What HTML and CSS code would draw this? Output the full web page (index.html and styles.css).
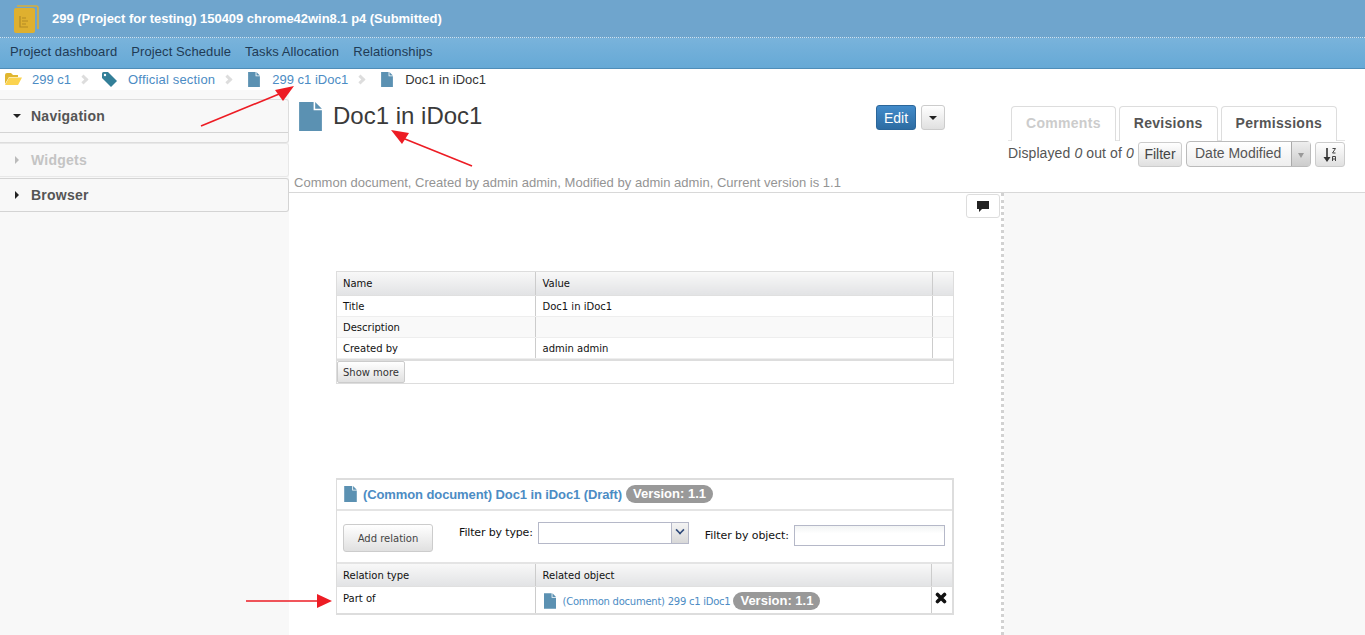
FILE: index.html
```html
<!DOCTYPE html>
<html lang="en">
<head>
  <meta charset="UTF-8">
  <title>Doc1 in iDoc1</title>
  <link rel="stylesheet" href="styles.css">
</head>
<body>

  <svg width="0" height="0" class="defs">
    <symbol id="doc-icon" viewBox="0 0 22 28">
      <path d="M0 0H14V8H22V28H0Z" fill="#5b91b2"/>
      <path d="M15.5 0L22 6.5H15.5Z" fill="#5b91b2"/>
    </symbol>
  </svg>

  <div class="topbar">
    <svg class="app-logo" width="25" height="28" viewBox="0 0 25 28">
      <path d="M3 1H22Q24 1 24 3V24" fill="none" stroke="#d9ae38" stroke-width="1.6"/>
      <rect x="0" y="3" width="21" height="25" rx="2" fill="#dfb02f"/>
      <path d="M6 11V22H14M8 13H12M8 16H14M8 19H12" fill="none" stroke="#b38a25" stroke-width="1.2"/>
    </svg>
    <span class="project-title">299 (Project for testing) 150409 chrome42win8.1 p4 (Submitted)</span>
  </div>

  <div class="menubar">
    <a href="#">Project dashboard</a>
    <a href="#">Project Schedule</a>
    <a href="#">Tasks Allocation</a>
    <a href="#">Relationships</a>
  </div>

  <div class="crumbs">
    <svg class="crumb-icon folder" width="17" height="12" viewBox="0 0 17 12">
      <path d="M0 2Q0 0 2 0H6L8 2H13V4H4L0 11Z" fill="#e0b62f"/>
      <path d="M4 4.5H17L13 12H0Z" fill="#fbd34f"/>
    </svg>
    <a href="#">299 c1</a>
    <span class="crumb-sep"></span>
    <svg class="crumb-icon tag" width="15" height="15" viewBox="0 0 15 15">
      <path d="M0 1.5Q0 0 1.5 0H6L15 9L9 15L0 6Z" fill="#337f98"/>
      <circle cx="3" cy="3" r="1.2" fill="#fff"/>
    </svg>
    <a href="#" class="after-tag">Official section</a>
    <span class="crumb-sep"></span>
    <svg class="crumb-icon crumb-doc" width="12" height="15"><use href="#doc-icon"/></svg>
    <a href="#" class="after-doc">299 c1 iDoc1</a>
    <span class="crumb-sep"></span>
    <svg class="crumb-icon crumb-doc" width="12" height="15"><use href="#doc-icon"/></svg>
    <span class="crumb-current">Doc1 in iDoc1</span>
  </div>

  <div class="workspace">
    <div class="sidebar">
      <div class="side-panel open">
        <div class="side-title"><span class="caret down"></span>Navigation</div>
      </div>
      <div class="side-panel disabled">
        <div class="side-title"><span class="caret right"></span>Widgets</div>
      </div>
      <div class="side-panel">
        <div class="side-title"><span class="caret right"></span>Browser</div>
      </div>
    </div>

    <div class="main">
      <div class="doc-head">
        <div class="doc-info">
          <div class="doc-title-row">
            <svg class="doc-title-icon" width="23" height="29"><use href="#doc-icon"/></svg>
            <h1>Doc1 in iDoc1</h1>
          </div>
          <p class="doc-meta">Common document, Created by admin admin, Modified by admin admin, Current version is 1.1</p>
        </div>
        <div class="doc-actions">
          <button class="edit-btn">Edit</button>
          <button class="caret-btn"><span class="caret down"></span></button>
        </div>
        <div class="doc-tabs">
          <div class="tabs">
            <div class="tab active">Comments</div>
            <div class="tab">Revisions</div>
            <div class="tab">Permissions</div>
          </div>
          <div class="tab-tools">
            <span class="tool-count">Displayed <em>0</em> out of <em>0</em></span>
            <button class="tool-btn filter-btn">Filter</button>
            <div class="sort-select">
              <span class="sort-value">Date Modified</span>
              <span class="sort-arrow"></span>
            </div>
            <button class="tool-btn sort-btn">
              <svg width="16" height="16" viewBox="0 0 16 16">
                <path d="M5 1V11" stroke="#333" stroke-width="1.6"/>
                <path d="M1.5 10H8.5L5 15Z" fill="#333"/>
                <path d="M10.5 1.5H13.5L10.5 6H13.5M10.5 14V9.5H13.5V14M10.5 12H13.5" fill="none" stroke="#444" stroke-width="1"/>
              </svg>
            </button>
          </div>
        </div>
      </div>

      <div class="doc-body">
        <div class="doc-content">
          <button class="comment-btn">
            <svg width="12" height="11" viewBox="0 0 12 11">
              <path d="M0 0H12V8H5L2 11V8H0Z" fill="#222"/>
            </svg>
          </button>

          <div class="grid-box props-box">
            <table class="grid">
              <thead>
                <tr><th class="col-a">Name</th><th>Value</th><th class="col-c"></th></tr>
              </thead>
              <tbody>
                <tr><td>Title</td><td>Doc1 in iDoc1</td><td></td></tr>
                <tr class="alt"><td>Description</td><td></td><td></td></tr>
                <tr><td>Created by</td><td>admin admin</td><td></td></tr>
              </tbody>
            </table>
            <div class="grid-foot"><button class="more-btn">Show more</button></div>
          </div>

          <div class="grid-box relations-box">
            <div class="rel-title">
              <svg width="13" height="16"><use href="#doc-icon"/></svg>
              <a href="#">(Common document) Doc1 in iDoc1 (Draft)</a>
              <span class="badge">Version: 1.1</span>
            </div>
            <div class="rel-tools">
              <button class="add-btn">Add relation</button>
              <label class="type-filter">Filter by type:
                <span class="combo"><span class="combo-arrow"></span></span>
              </label>
              <label class="object-filter">Filter by object:
                <input type="text" class="object-input">
              </label>
            </div>
            <table class="grid">
              <thead>
                <tr><th class="col-a">Relation type</th><th>Related object</th><th class="col-c"></th></tr>
              </thead>
              <tbody>
                <tr class="rel-row">
                  <td class="part-of">Part of</td>
                  <td>
                    <span class="rel-object">
                      <svg width="12" height="16"><use href="#doc-icon"/></svg>
                      <a href="#">(Common document) 299 c1 iDoc1</a>
                      <span class="badge">Version: 1.1</span>
                    </span>
                  </td>
                  <td class="remove-cell">
                    <svg width="12" height="12" viewBox="0 0 12 12">
                      <path d="M2.5 2.5L9.5 9.5M9.5 2.5L2.5 9.5" stroke="#111" stroke-width="3.6" stroke-linecap="round"/>
                    </svg>
                  </td>
                </tr>
              </tbody>
            </table>
          </div>
        </div>
        <div class="side-pane"></div>
      </div>
    </div>
  </div>

  <!-- red arrows drawn on top of the screenshot -->
  <svg class="arrows" width="1365" height="635" viewBox="0 0 1365 635">
    <g stroke="#ed1c24" stroke-width="1.6" fill="#ed1c24">
      <path d="M201 126L284 92" fill="none"/>
      <path d="M294 86L275 90L283 101Z" stroke="none"/>
      <path d="M472 166L400 137" fill="none"/>
      <path d="M391 130L402 144L409 133Z" stroke="none"/>
      <path d="M246 601H320" fill="none"/>
      <path d="M332 601L317 594V608Z" stroke="none"/>
    </g>
  </svg>

</body>
</html>
```

FILE: styles.css
```css
* {
  box-sizing: border-box;
}

html, body {
  margin: 0;
  padding: 0;
  height: 635px;
  overflow: hidden;
}

body {
  position: relative;
  background-color: #fff;
  color: #333;
  font-family: 'Liberation Sans', Arial, sans-serif;
  font-size: 14px;
}

a {
  color: #4c8cc4;
  text-decoration: none;
}

button {
  font-family: inherit;
}

.defs {
  position: absolute;
}

/* Top bars */
.topbar {
  height: 38px;
  padding-left: 14px;
  display: flex;
  align-items: center;
  gap: 13px;
  background-color: #6fa5cd;
  border-bottom: 1px dotted #cfe2f0;
}

.project-title {
  color: #fff;
  font-size: 13px;
  font-weight: bold;
  letter-spacing: -0.03px;
}

.menubar {
  height: 31px;
  padding: 0 0 4px 10px;
  display: flex;
  align-items: center;
  gap: 14px;
  background: linear-gradient(#79b3db, #66a9d6);
  border-bottom: 1px solid #4f8db8;
}

.menubar a {
  color: #1f3b55;
  font-size: 13px;
  letter-spacing: 0.1px;
}

.crumbs {
  height: 21px;
  padding: 0 0 1px 5px;
  display: flex;
  align-items: center;
  font-size: 13px;
}

.crumb-icon {
  flex: none;
}

.crumbs a {
  margin-left: 10px;
}

.crumbs .after-tag {
  margin-left: 11px;
  letter-spacing: 0.18px;
}

.crumbs .after-doc {
  margin-left: 12px;
}

.crumb-doc {
  margin-left: 2px;
}

.crumb-current {
  margin-left: 12px;
  color: #333;
}

.crumb-sep {
  width: 7px;
  height: 7px;
  margin: 0 15px 0 9px;
  border-top: 3px solid #ddd;
  border-right: 3px solid #ddd;
  transform: rotate(45deg);
}

/* Layout */
.workspace {
  display: grid;
  grid-template-columns: 289px 1fr;
  height: 545px;
}

.sidebar {
  padding-top: 9px;
  background-color: #f8f8f8;
}

.side-panel {
  height: 34px;
  background-color: #f8f8f8;
  border: 1px solid #d4d4d4;
  border-left: 0;
  border-radius: 0 3px 3px 0;
}

.side-panel.open {
  height: 44px;
  border-color: #ddd;
  position: relative;
}

.side-panel.open::after {
  content: "";
  position: absolute;
  left: 0;
  right: 0;
  top: 32px;
  border-top: 1px solid #d4d4d4;
}

.side-panel.disabled {
  border-color: #e8e8e8;
  margin-bottom: 1px;
}

.side-title {
  height: 32px;
  padding-left: 13px;
  display: flex;
  align-items: center;
  color: #555;
  font-size: 14px;
  font-weight: bold;
  letter-spacing: 0.25px;
}

.disabled .side-title {
  color: #c4c4c4;
}

.caret {
  display: inline-block;
  width: 0;
  height: 0;
}

.caret.down {
  border-left: 4px solid transparent;
  border-right: 4px solid transparent;
  border-top: 4px solid #222;
}

.caret.right {
  border-top: 4px solid transparent;
  border-bottom: 4px solid transparent;
  border-left: 4px solid #222;
}

.disabled .caret.right {
  border-left-color: #bbb;
}

.side-title .caret {
  margin-right: 10px;
}

.side-title .caret.right {
  margin-left: 2px;
  margin-right: 12px;
}

/* Document header */
.doc-head {
  height: 103px;
  display: grid;
  grid-template-columns: 587px 135px 1fr;
  border-bottom: 1px solid #d8d8d8;
}

.doc-info {
  padding: 12px 0 0 5px;
}

.doc-title-row {
  height: 73px;
  padding-left: 5px;
  display: flex;
  align-items: flex-start;
  gap: 11px;
}

.doc-title-row h1 {
  margin: 0;
  font-size: 24px;
  font-weight: normal;
  line-height: 28px;
  color: #3a3a3a;
}

.doc-meta {
  margin: 0;
  color: #949494;
  font-size: 13px;
  line-height: 15px;
  letter-spacing: 0.025px;
  white-space: nowrap;
}

.doc-actions {
  padding-top: 15px;
  display: flex;
  align-items: flex-start;
  gap: 5px;
}

.edit-btn {
  width: 40px;
  height: 25px;
  padding: 0;
  color: #fff;
  font-size: 14px;
  background: linear-gradient(#428bca, #2d6ca2);
  border: 1px solid #2b669a;
  border-radius: 3px;
}

.caret-btn {
  width: 24px;
  height: 25px;
  padding: 0;
  background: linear-gradient(#fff, #e0e0e0);
  border: 1px solid #ccc;
  border-radius: 3px;
}

.caret-btn .caret {
  display: block;
  margin: 0 auto;
}

.doc-tabs {
  padding-top: 16px;
  margin-left: -3px;
}

.tabs {
  width: 337px;
  height: 35px;
  padding-left: 3px;
  display: flex;
  gap: 3px;
  border-bottom: 1px solid #e4e4e4;
}

.tab {
  height: 35px;
  padding: 0 14px 2px;
  display: flex;
  align-items: center;
  color: #555;
  font-size: 14px;
  font-weight: bold;
  letter-spacing: 0.3px;
  background-color: #fff;
  border: 1px solid #ddd;
  border-bottom: 0;
  border-radius: 4px 4px 0 0;
}

.tab.active {
  color: #ccc;
}

.tab-tools {
  display: flex;
  align-items: center;
  color: #555;
  font-size: 14px;
}

.tool-count {
  flex: none;
  width: 130px;
  margin-top: -3px;
  letter-spacing: 0.1px;
  white-space: nowrap;
}

.tool-btn {
  flex: none;
  height: 25px;
  margin-top: 1px;
  padding: 0 5px;
  color: #444;
  font-size: 14px;
  background: linear-gradient(#fff, #e0e0e0);
  border: 1px solid #ccc;
  border-radius: 3px;
}

.filter-btn {
  width: 44px;
  padding: 0 0 2px;
}

.sort-select {
  flex: none;
  width: 125px;
  height: 26px;
  margin: 0 4px;
  display: flex;
  align-items: stretch;
  color: #555;
  background: linear-gradient(#fff, #eee);
  border: 1px solid #bbb;
  border-radius: 4px;
}

.sort-value {
  flex: 1;
  padding: 3px 0 0 8px;
}

.sort-arrow {
  width: 19px;
  position: relative;
  background: linear-gradient(#eee, #ccc);
  border-left: 1px solid #aaa;
}

.sort-arrow::after {
  content: "";
  position: absolute;
  left: 6px;
  top: 11px;
  border-left: 3px solid transparent;
  border-right: 3px solid transparent;
  border-top: 5px solid #999;
}

.sort-btn {
  width: 30px;
  padding: 0;
}

.sort-btn svg {
  display: block;
  margin: 0 auto;
}

/* Document body */
.doc-body {
  display: flex;
  height: 442px;
}

.doc-content {
  position: relative;
  width: 715px;
  padding: 78px 0 0 47px;
  border-right: 3px dotted #d2d2d2;
}

.side-pane {
  flex: 1;
  background-color: #f8f8f8;
}

.comment-btn {
  position: absolute;
  top: 1px;
  right: 1px;
  width: 34px;
  height: 24px;
  padding: 0;
  background-color: #fff;
  border: 1px solid #ddd;
  border-radius: 3px;
}

.comment-btn svg {
  display: block;
  margin: 0 auto;
}

.grid-box {
  width: 618px;
  border: 1px solid #ddd;
  font-family: 'DejaVu Sans', Tahoma, sans-serif;
  font-size: 10px;
  color: #111;
}

.relations-box {
  margin-top: 94px;
  border-width: 2px 2px 2px 1px;
}

.grid {
  width: 100%;
  border-collapse: collapse;
  table-layout: fixed;
}

.grid th {
  height: 23px;
  padding: 0 6px;
  font-weight: normal;
  text-align: left;
  background: linear-gradient(#f8f8f8, #e2e3e5);
  border-right: 1px solid #ccc;
  border-bottom: 1px solid #e0e0e0;
}

.grid td {
  height: 21px;
  padding: 2px 6px 0;
  border-right: 1px solid #ccc;
  border-bottom: 1px solid #eee;
}

.grid th:nth-child(2),
.grid td:nth-child(2) {
  padding-left: 7px;
}

.grid th:last-child,
.grid td:last-child {
  border-right: 0;
}

.grid .alt td {
  background-color: #f9f9f9;
}

.col-a {
  width: 198px;
}

.col-c {
  width: 21px;
}

.grid-foot {
  border-top: 2px solid #ddd;
  height: 24px;
}

.more-btn {
  display: block;
  width: 68px;
  height: 22px;
  padding: 1px 0 0;
  color: #333;
  font-family: inherit;
  font-size: 10px;
  background: linear-gradient(#fff, #e0e0e0);
  border: 1px solid #ccc;
  border-radius: 2px;
}

.rel-title {
  height: 31px;
  padding-left: 7px;
  display: flex;
  align-items: center;
  gap: 6px;
  border-bottom: 2px solid #e4e4e4;
}

.rel-title a {
  font-family: 'Liberation Sans', Arial, sans-serif;
  font-size: 13px;
  font-weight: bold;
  letter-spacing: -0.1px;
  white-space: nowrap;
}

.badge {
  padding: 2px 7px;
  color: #fff;
  font-family: 'Liberation Sans', Arial, sans-serif;
  font-size: 13px;
  font-weight: bold;
  line-height: 14px;
  white-space: nowrap;
  background-color: #999;
  border-radius: 10px;
}

.rel-title .badge {
  margin-left: -2px;
}

.rel-tools {
  height: 53px;
  display: flex;
  align-items: flex-start;
  border-bottom: 2px solid #e4e4e4;
}

.relations-box .grid th {
  padding-top: 2px;
}

.add-btn {
  width: 90px;
  height: 28px;
  margin: 13px 0 0 6px;
  padding: 1px 0 0;
  color: #444;
  font-family: inherit;
  font-size: 10px;
  background: linear-gradient(#fff, #e0e0e0);
  border: 1px solid #ccc;
  border-radius: 3px;
}

.type-filter {
  margin: 11px 0 0 26px;
  display: flex;
  align-items: center;
  gap: 5px;
  font-size: 11px;
  letter-spacing: -0.15px;
}

.combo {
  position: relative;
  display: block;
  width: 151px;
  height: 22px;
  background-color: #fff;
  border: 1px solid #b5b8c8;
}

.combo-arrow {
  position: absolute;
  top: 0;
  right: 0;
  bottom: 0;
  width: 17px;
  background: linear-gradient(#f4f4f4, #d8d8d8);
  border-left: 1px solid #b5b8c8;
}

.combo-arrow::after {
  content: "";
  position: absolute;
  left: 4px;
  top: 3px;
  width: 6px;
  height: 6px;
  border-right: 2px solid #2f4a7a;
  border-bottom: 2px solid #2f4a7a;
  transform: rotate(45deg) scale(0.8);
}

.object-filter {
  margin: 14px 0 0 16px;
  display: flex;
  align-items: center;
  gap: 5px;
  font-size: 11px;
  letter-spacing: -0.07px;
}

.object-input {
  width: 151px;
  height: 21px;
  padding: 0 3px;
  background: linear-gradient(#f2f4f4, #fff 40%);
  border: 1px solid #b5b8c8;
}

.grid .rel-row td {
  height: 26px;
  padding: 0 6px;
  border-bottom: 0;
}

.grid .rel-row td:nth-child(2) {
  padding-left: 8px;
}

.grid .rel-row .part-of {
  vertical-align: top;
  padding-top: 6px;
}

.rel-object {
  margin-top: 2px;
  display: flex;
  align-items: center;
  gap: 7px;
}

.rel-object a {
  margin-top: 1px;
  font-size: 10px;
  letter-spacing: -0.25px;
  white-space: nowrap;
}

.rel-object .badge {
  margin-left: -4px;
}

.grid .rel-row .remove-cell {
  padding: 0 3px 4px;
}

.remove-cell svg {
  display: block;
}

/* Annotation layer */
.arrows {
  position: absolute;
  top: 0;
  left: 0;
  pointer-events: none;
}
```
